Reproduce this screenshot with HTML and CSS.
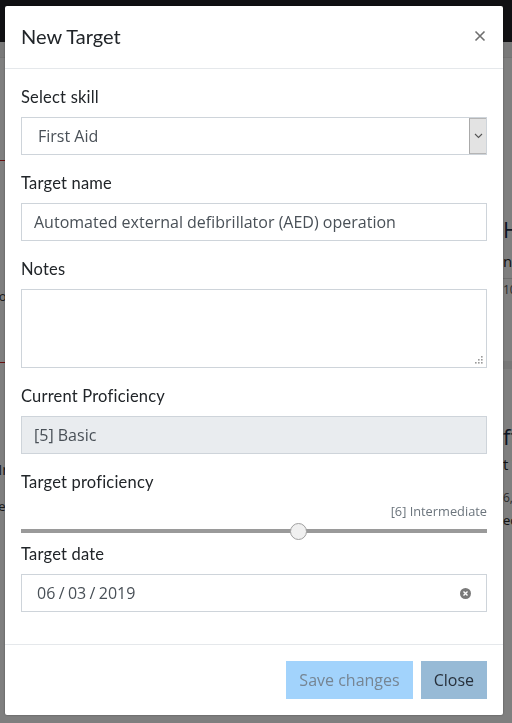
FILE: index.html
```html
<!DOCTYPE html>
<html lang="en">
<head>
<meta charset="utf-8">
<title>New Target</title>
<link rel="stylesheet" href="styles.css">
</head>
<body>
<div class="page">
  <div class="navbar"></div>
  <div class="subbar"></div>
  <div class="content">
    <div class="col-left">
      <div class="card card-red">
        <div class="bg-row bg-row-a"><span class="peek-left">Pos</span></div>
      </div>
      <div class="bg-row bg-row-b"><span class="peek-left">Nr</span></div>
      <div class="bg-row bg-row-c"><span class="peek-left small">Se1</span></div>
    </div>
    <div class="col-right">
      <div class="rt-title">H</div>
      <div class="rt-sub">ni</div>
      <div class="rt-meta">10</div>
      <div class="rt-title rt-title2">ft</div>
      <div class="rt-sub rt-sub2">t T</div>
      <div class="rt-meta rt-meta2">6,</div>
      <div class="rt-sub rt-sub3">ec</div>
    </div>
  </div>
</div>
<div class="overlay"></div>

<div class="modal">
  <div class="modal-header">
    <h5 class="modal-title">New Target</h5>
    <svg class="close" width="12" height="12" viewBox="0 0 12 12"><path d="M1.5 1.5 L10.5 10.5 M10.5 1.5 L1.5 10.5" stroke="#6f6f6f" stroke-width="1.6" fill="none"/></svg>
  </div>
  <div class="modal-body">
    <div class="group">
      <div class="label">Select skill</div>
      <div class="control select">
        <span class="select-text">First Aid</span>
        <span class="select-arrow"><svg width="9" height="6" viewBox="0 0 9 6"><path d="M1 1 L4.5 4.5 L8 1" stroke="#555" stroke-width="1.1" fill="none"/></svg></span>
      </div>
    </div>
    <div class="group">
      <div class="label">Target name</div>
      <div class="control text">Automated external defibrillator (AED) operation</div>
    </div>
    <div class="group">
      <div class="label">Notes</div>
      <div class="control textarea">
        <svg width="8" height="8" viewBox="0 0 8 8" class="grip">
          <rect x="6" y="0" width="1.6" height="1.6" fill="#9a9a9a"/>
          <rect x="3" y="3" width="1.6" height="1.6" fill="#9a9a9a"/>
          <rect x="6" y="3" width="1.6" height="1.6" fill="#9a9a9a"/>
          <rect x="0" y="6" width="1.6" height="1.6" fill="#9a9a9a"/>
          <rect x="3" y="6" width="1.6" height="1.6" fill="#9a9a9a"/>
          <rect x="6" y="6" width="1.6" height="1.6" fill="#9a9a9a"/>
        </svg>
      </div>
    </div>
    <div class="group">
      <div class="label">Current Proficiency</div>
      <div class="control text disabled">[5] Basic</div>
    </div>
    <div class="group group-range">
      <div class="label">Target proficiency</div>
      <div class="range-value">[6] Intermediate</div>
      <div class="range">
        <div class="track"><div class="thumb-wrap" style="width:60%"></div><div class="thumb"></div></div>
      </div>
    </div>
    <div class="group">
      <div class="label">Target date</div>
      <div class="control date">
        <span class="date-text">06 / 03 / 2019</span>
        <svg width="11" height="11" viewBox="0 0 11 11" class="clear"><circle cx="5.5" cy="5.5" r="5.5" fill="#7a7a7a"/><path d="M3.5 3.5 L7.5 7.5 M7.5 3.5 L3.5 7.5" stroke="#fff" stroke-width="1.4"/></svg>
      </div>
    </div>
  </div>
  <div class="modal-footer">
    <div class="btn btn-save">Save changes</div>
    <div class="btn btn-close">Close</div>
  </div>
</div>
</body>
</html>
```

FILE: styles.css
```css
html, body {
  margin: 0;
  padding: 0;
}
body {
  width: 512px;
  height: 723px;
  overflow: hidden;
  background: #fff;
  font-family: "Open Sans", "Noto Sans", sans-serif;
  color: #212529;
}
.page {
  height: 723px;
  overflow: hidden;
}
.navbar {
  height: 42px;
  background: #212126;
}
.subbar {
  height: 15px;
  background: #f2f2f2;
  border-bottom: 1px solid #e6e6e6;
}
.content {
  display: grid;
  grid-template-columns: 503px 1fr;
}
.col-left {
  padding-top: 102px;
}
.card-red {
  border-top: 1px solid #d02020;
  border-bottom: 1px solid #d02020;
  height: 201px;
}
.bg-row {
  font-size: 13px;
  color: #333;
  white-space: nowrap;
  overflow: hidden;
}
.bg-row-a { padding-top: 126px; }
.bg-row-b { padding-top: 96px; font-size: 15px; }
.bg-row-c { padding-top: 18px; }
.peek-left {
  display: inline-block;
  margin-left: -9px;
}
.col-right {
  white-space: nowrap;
  overflow: hidden;
  padding-top: 156px;
  color: #333;
}
.rt-title {
  font-size: 22px;
  line-height: 30px;
  color: #1b2a44;
}
.rt-sub {
  font-size: 15px;
  line-height: 22px;
  margin-top: 6px;
  color: #222;
  border-bottom: 1px solid #ddd;
  padding-bottom: 6px;
}
.rt-meta {
  font-size: 12px;
  line-height: 18px;
  margin-top: 2px;
  color: #555;
  padding-bottom: 62px;
  border-bottom: 8px solid #eee;
}
.rt-title2 { margin-top: 52px; }
.rt-sub2 { border-bottom: none; margin-top: 2px; padding-bottom: 0; }
.rt-meta2 { margin-top: 14px; border-bottom: none; padding-bottom: 0; }
.rt-sub3 { border-bottom: none; margin-top: 2px; font-size: 13px; }

.overlay {
  position: fixed;
  inset: 0;
  background: rgba(0, 0, 0, 0.5);
}

.modal {
  position: absolute;
  left: 5px;
  top: 6px;
  width: 498px;
  height: 709px;
  background: #fff;
  border-radius: 2px;
  box-shadow: 0 0 2px rgba(0, 0, 0, 0.4);
  display: flex;
  flex-direction: column;
}
.modal-header {
  display: flex;
  align-items: center;
  justify-content: space-between;
  padding: 15px 17px 17px 16px;
  border-bottom: 1px solid #e5e8eb;
}
.modal-title {
  margin: 0;
  font-family: Lato, "Open Sans", sans-serif;
  font-weight: 400;
  font-size: 20px;
  line-height: 30px;
  color: #212529;
}
.close {
  display: block;
}
.modal-body {
  padding: 16px 16px 0;
  flex: 1;
}
.group {
  margin-bottom: 16px;
}
.label {
  font-family: Lato, "Open Sans", sans-serif;
  font-size: 16.5px;
  letter-spacing: 0.2px;
  line-height: 24px;
  margin-bottom: 8px;
  color: #212529;
}
.control {
  box-sizing: border-box;
  height: 38px;
  border: 1px solid #ced4da;
  font-size: 16px;
  line-height: 24px;
  color: #495057;
  padding: 6px 12px;
}
.text {
  white-space: nowrap;
  overflow: hidden;
}
.disabled {
  background: #e9ecef;
}
.select {
  display: flex;
  align-items: stretch;
  padding: 0 0 0 16px;
}
.select-text {
  flex: 1;
  display: flex;
  align-items: center;
}
.select-arrow {
  width: 17px;
  box-sizing: border-box;
  background: #e3e3e3;
  border-left: 1px solid #aaa;
  border-top: 1px solid #b5b5b5;
  border-bottom: 1px solid #b5b5b5;
  display: flex;
  align-items: center;
  justify-content: center;
}
.textarea {
  height: 79px;
  display: flex;
  align-items: flex-end;
  justify-content: flex-end;
  padding: 0 3px 3px 0;
}
.grip {
  display: block;
}
.group-range {
  margin-bottom: 0;
}
.group-range .label {
  margin-bottom: 0;
}
.range-value {
  text-align: right;
  font-size: 12.8px;
  line-height: 18px;
  margin-top: 8px;
  color: #6c757d;
}
.range {
  height: 20px;
  margin-top: 1px;
  margin-bottom: 1px;
  display: flex;
  align-items: center;
}
.track {
  flex: 1;
  height: 4px;
  background: #9a9a9a;
  display: flex;
  align-items: center;
  padding-right: 18px;
}
.thumb-wrap {
  height: 4px;
}
.thumb {
  width: 17px;
  height: 17px;
  flex: none;
  border-radius: 50%;
  background: #f0f0f0;
  border: 1px solid #a0a0a0;
  box-sizing: border-box;
}
.date {
  display: flex;
  align-items: center;
  justify-content: space-between;
  padding: 6px 15px 6px 15px;
}
.date-text {
  word-spacing: -0.8px;
}
.clear {
  display: block;
}
.modal-footer {
  display: flex;
  justify-content: flex-end;
  gap: 8px;
  padding: 16px;
  border-top: 1px solid #e5e8eb;
}
.btn {
  font-size: 16px;
  line-height: 24px;
  padding: 7px 13px;
}
.btn-save {
  background: #a2d3fc;
  color: #768593;
}
.btn-close {
  background: #97bad6;
  color: #27303b;
}
```
